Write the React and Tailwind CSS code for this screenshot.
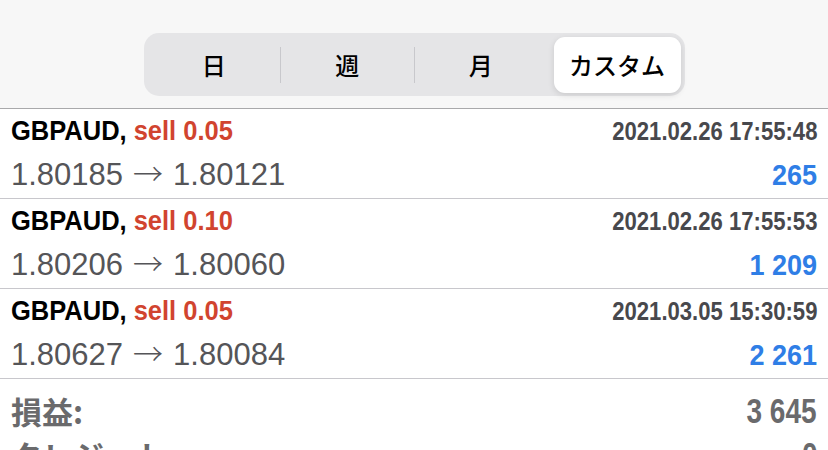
import React from "react";

const trades = [
  { lot: "0.05", time: "2021.02.26 17:55:48", open: "1.80185", close: "1.80121", profit: "265" },
  { lot: "0.10", time: "2021.02.26 17:55:53", open: "1.80206", close: "1.80060", profit: "1 209" },
  { lot: "0.05", time: "2021.03.05 15:30:59", open: "1.80627", close: "1.80084", profit: "2 261" },
];

const jp = "font-['Noto_Sans_CJK_JP',sans-serif]";

const Segment = ({ label, active }) => (
  <div className="flex-1 flex items-center justify-end">
    <div
      className={`h-[56px] flex items-center justify-center rounded-[11px] text-[24px] font-medium text-black ${jp} ${
        active ? "w-[127px] bg-white shadow-[0_2px_6px_rgba(0,0,0,0.12)]" : "w-full"
      }`}
    >
      {label}
    </div>
  </div>
);

const App = () => {
  return (
    <div className="w-[828px] h-[450px] overflow-hidden bg-white font-['Liberation_Sans',sans-serif]">
      <div className="h-[109px] bg-[#f7f7f7] border-b border-[#a9a9ab] flex justify-center pt-[33px]">
        <div className="w-[541px] h-[63px] rounded-[15px] bg-[#e5e5e7] p-[4px] flex items-center">
          <Segment label="日" />
          <div className="w-px h-[36px] bg-[#c8c8cc]" />
          <Segment label="週" />
          <div className="w-px h-[36px] bg-[#c8c8cc]" />
          <Segment label="月" />
          <div className="w-px h-[36px] bg-transparent" />
          <Segment label="カスタム" active />
        </div>
      </div>

      {trades.map((t, i) => (
        <div key={i} className="h-[90px] border-b border-[#c8c7cc] px-[11px] pt-[6px]">
          <div className="flex justify-between items-baseline leading-[32px]">
            <div className="inline-block origin-left scale-x-[0.91] font-bold text-[28px] whitespace-nowrap">
              <span className="text-black">GBPAUD, </span>
              <span className="text-[#d1442f]">sell {t.lot}</span>
            </div>
            <div className="inline-block origin-right scale-x-[0.85] font-bold text-[26px] text-[#48484c] whitespace-nowrap">
              {t.time}
            </div>
          </div>
          <div className="flex justify-between items-baseline leading-[36px] mt-[7px]">
            <div className="text-[31px] text-[#555558] whitespace-nowrap">
              {t.open}
              <span className={`${jp} font-light mx-[10px] text-[30px]`}>→</span>
              {t.close}
            </div>
            <div className="inline-block origin-right scale-x-[0.9] font-bold text-[30px] text-[#2f7ee6] whitespace-nowrap">
              {t.profit}
            </div>
          </div>
        </div>
      ))}

      <div className="px-[11px] pt-[10px]">
        <div className="flex justify-between items-center h-[44px]">
          <div className={`${jp} font-bold text-[31px] text-[#6a6a6c]`}>損益:</div>
          <div className="inline-block origin-right scale-x-[0.8] font-bold text-[35px] text-[#6a6a6c]">3 645</div>
        </div>
        <div className="flex justify-between items-center h-[44px]">
          <div className={`${jp} font-bold text-[31px] text-[#6a6a6c]`}>クレジット:</div>
          <div className="inline-block origin-right scale-x-[0.8] font-bold text-[35px] text-[#6a6a6c]">0</div>
        </div>
      </div>
    </div>
  );
};

export default App;
